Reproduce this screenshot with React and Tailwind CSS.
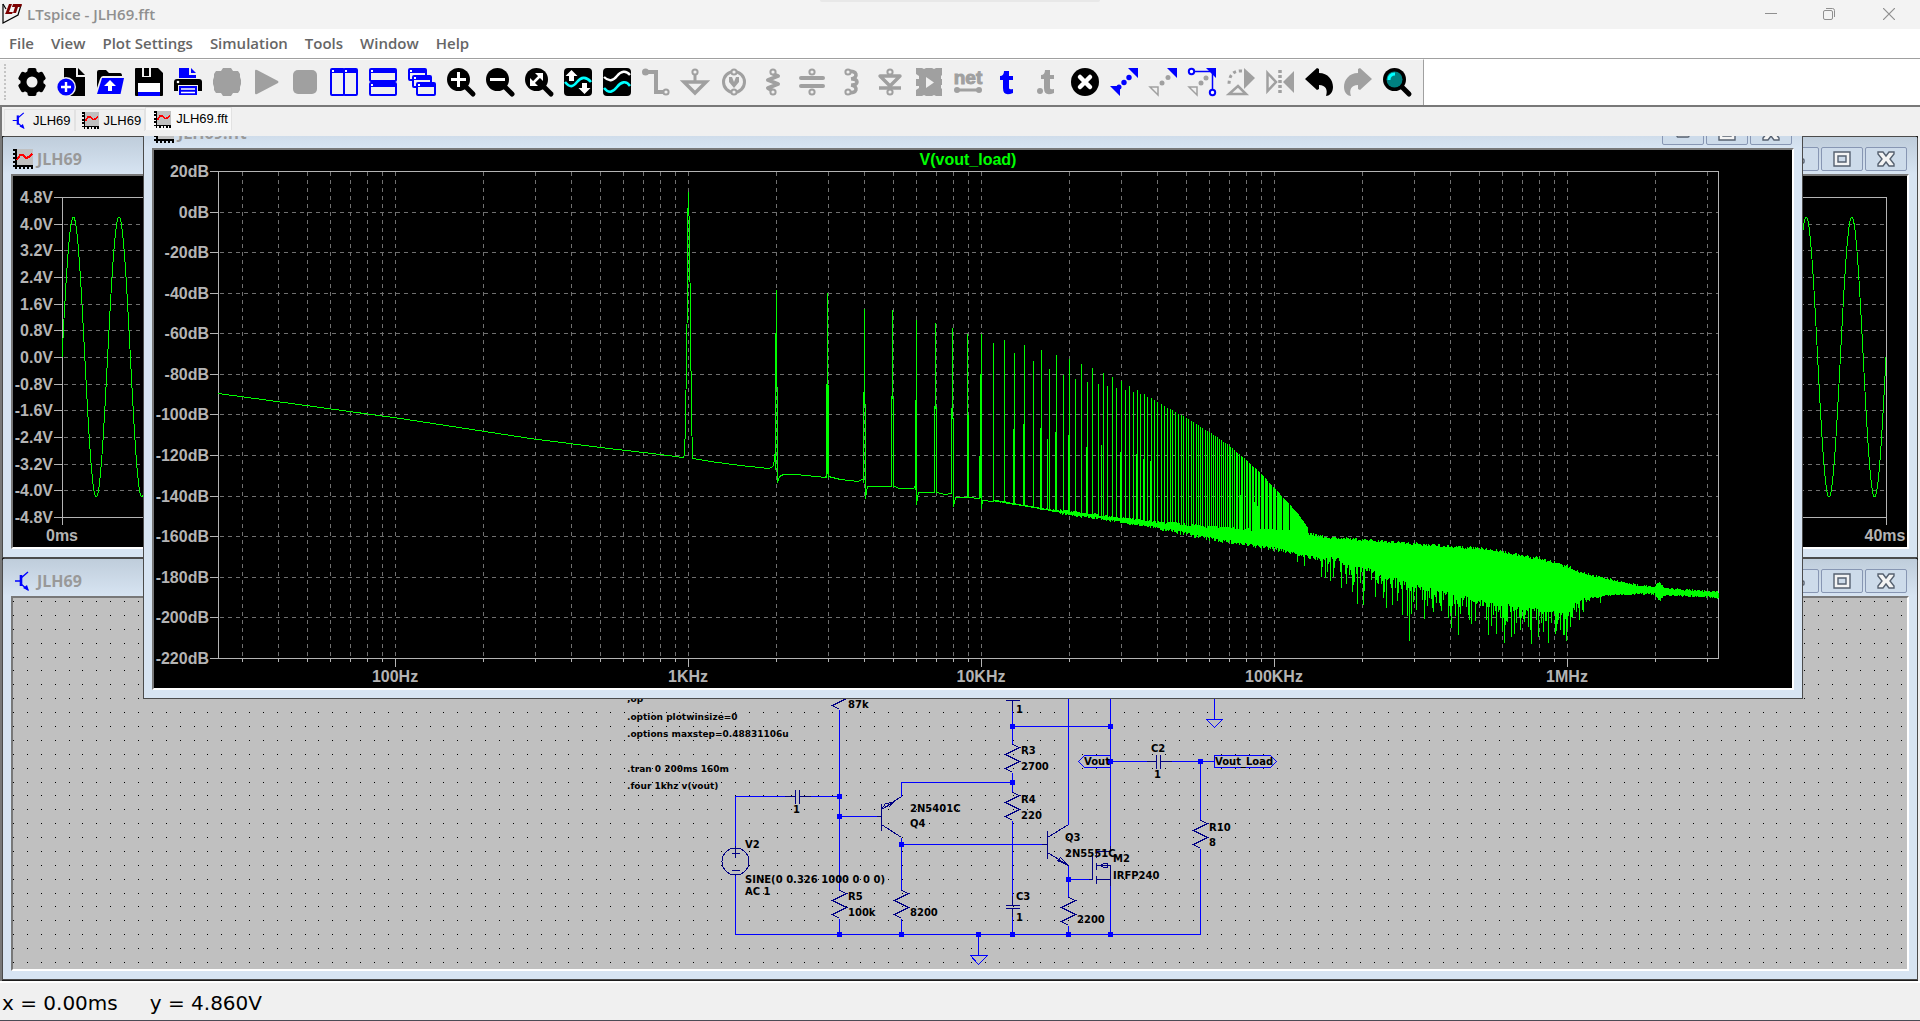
const BLUE = "#0000ff";
const NAVY = "#000084";
const GREY = "#a0a0a0";
const FACE = "#f0f0f0";

const menus = ["File", "View", "Plot Settings", "Simulation", "Tools", "Window", "Help"];

/* ---------- toolbar icons, 28x28 ---------- */

const Teeth = ({ color }) => (
  <g fill={color}>
    <circle cx="14" cy="14" r="11.5" />
    <rect x="9.5" y="0" width="9" height="28" rx="2" />
    <rect x="9.5" y="0" width="9" height="28" rx="2" transform="rotate(60 14 14)" />
    <rect x="9.5" y="0" width="9" height="28" rx="2" transform="rotate(120 14 14)" />
  </g>
);

const Lens = ({ children }) => (
  <g>
    <path d="M18 18L26 26" stroke="#000" strokeWidth="5" strokeLinecap="round" />
    <circle cx="11.5" cy="11.5" r="11.5" fill="#000" />
    {children}
  </g>
);

const MiniWindow = ({ x, y, w, h }) => (
  <g>
    <rect x={x + 1} y={y + 1} width={w - 2} height={h - 2} rx="1" fill={FACE} stroke={BLUE} strokeWidth="2" />
    <rect x={x + 1} y={y + 1} width={w - 2} height="4" fill={BLUE} />
    <rect x={x + 2} y={y + 2} width="2" height="2" fill="#fff" />
  </g>
);

const Pin = ({ x, y }) => <circle cx={x} cy={y} r="2.6" fill={FACE} stroke={GREY} strokeWidth="2" />;

const tools = [
  ["Settings", <><Teeth color="#000" /><circle cx="14" cy="14" r="5.5" fill={FACE} /></>],
  ["New schematic", <>
    <path d="M7 0H19V9H28V28H7Z" fill="#000" />
    <path d="M21 0L28 7H21Z" fill="#000" />
    <circle cx="9" cy="19" r="10" fill={FACE} />
    <circle cx="9" cy="19" r="8.6" fill={BLUE} />
    <path d="M9 14V24M4 19H14" stroke="#fff" strokeWidth="2.4" />
  </>],
  ["Open", <>
    <path d="M1 20V4Q1 2 3 2H10L13 5H24Q26 5 26 8H7Q5 8 4 11Z" fill="#000" />
    <path d="M6 10H28L24.500 26H1Z" fill={BLUE} />
    <path d="M14 12L20 18H16V23H12V18H8Z" fill="#fff" />
  </>],
  ["Save", <>
    <path d="M0 1Q0 0 1 0H23L28 5V27Q28 28 27 28H1Q0 28 0 27Z" fill="#000" />
    <rect x="7" y="0" width="12" height="9" fill={FACE} />
    <rect x="9" y="0" width="5" height="8" fill="#000" />
    <rect x="16" y="0" width="6" height="10" fill="#000" />
    <rect x="3" y="15" width="22" height="9" fill="#fff" />
    <rect x="3" y="24" width="22" height="4" fill={BLUE} />
  </>],
  ["Print", <>
    <path d="M5 0H15V7H22V10H5Z" fill={BLUE} />
    <path d="M17 0L22 5H17Z" fill={BLUE} />
    <path d="M3 11H25Q28 11 28 14V23H0V14Q0 11 3 11Z" fill="#000" />
    <circle cx="4" cy="14" r="1.300" fill="#fff" />
    <rect x="4" y="17" width="20" height="11" fill={FACE} />
    <path d="M5 18H23V27H5Z" fill={BLUE} />
    <path d="M7 21H21M7 24.500H21" stroke="#fff" strokeWidth="1.300" />
  </>],
  ["Edit simulation", <path d="M10 0H18L20 3H25L27 6V9L28 12V16L27 19V22L25 25H20L18 28H10L8 25H3L1 22V19L0 16V12L1 9V6L3 3H8Z" fill={GREY} />],
  ["Run", <path d="M3 3Q3 1 5 2L26 13Q27 14 26 15L5 26Q3 27 3 25Z" fill={GREY} />],
  ["Stop", <rect x="2" y="2" width="24" height="24" rx="5" fill={GREY} />],
  ["Tile vertically", <><MiniWindow x={0} y={0} w={15} h={28} /><MiniWindow x={13} y={0} w={15} h={28} /></>],
  ["Tile horizontally", <><MiniWindow x={0} y={0} w={28} h={14} /><MiniWindow x={0} y={14} w={28} h={14} /></>],
  ["Cascade", <>
    <MiniWindow x={0} y={0} w={19} h={13} />
    <MiniWindow x={4} y={7} w={20} h={13} />
    <MiniWindow x={8} y={14} w={20} h={14} />
  </>],
  ["Zoom in", <Lens><path d="M11.500 4V19M4 11.500H19" stroke="#fff" strokeWidth="3" /></Lens>],
  ["Zoom out", <Lens><path d="M4 11.500H19" stroke="#fff" strokeWidth="3" /></Lens>],
  ["Zoom to fit", <Lens>
    <path d="M8 15L15 8" stroke="#fff" strokeWidth="2.500" />
    <path d="M10 5H18V13ZM5 10V18H13Z" fill="#fff" />
  </Lens>],
  ["Autorange", <>
    <rect width="28" height="28" rx="4" fill="#000" />
    <path d="M1 14C6 20 9 19 13 14S22 8 27 14" fill="none" stroke="#00ffff" strokeWidth="2.600" />
    <path d="M7.500 2L13.500 8H10V13H5V8H1.500ZM20.500 26L26.500 20H23V15H18V20H14.500Z" fill="#fff" />
  </>],
  ["Add trace", <>
    <rect width="28" height="28" rx="4" fill="#000" />
    <path d="M1 9C6 14 10 13 14 8S23 2 27 7" fill="none" stroke="#fff" strokeWidth="2.400" />
    <path d="M1 20C6 26 10 24 14 19S23 12 27 18" fill="none" stroke="#00ffff" strokeWidth="2.600" />
  </>],
  ["Wire", <>
    <path d="M3 4H14V24H22" fill="none" stroke={GREY} strokeWidth="4" />
    <circle cx="3.500" cy="4" r="3.500" fill={GREY} /><Pin x={24} y={24} />
  </>],
  ["Ground", <>
    <path d="M14 6V13" stroke={GREY} strokeWidth="3" />
    <path d="M3 14H25L14 25Z" fill="none" stroke={GREY} strokeWidth="3.500" /><Pin x={14} y={4} />
  </>],
  ["Voltage source", <>
    <circle cx="14" cy="14" r="10.500" fill="none" stroke={GREY} strokeWidth="3" />
    <path d="M9 9H12L14 14L16 9H19V14L14 20L9 14Z" fill={GREY} /><Pin x={14} y={4} /><Pin x={14} y={24} />
  </>],
  ["Resistor", <>
    <path d="M14 6L19 8L9 12L19 16L9 20L14 23" fill="none" stroke={GREY} strokeWidth="4" strokeLinejoin="round" />
    <Pin x={14} y={4} /><Pin x={14} y={24} />
  </>],
  ["Capacitor", <>
    <path d="M3 10H25M3 18H25" stroke={GREY} strokeWidth="4" strokeLinecap="round" />
    <Pin x={14} y={4} /><Pin x={14} y={24} />
  </>],
  ["Inductor", <>
    <path d="M11 4C20 1 22 10 14 11C22 10 22 18 14 17C22 18 20 27 11 24" fill="none" stroke={GREY} strokeWidth="3.600" />
    <Pin x={11} y={4} /><Pin x={11} y={24} />
  </>],
  ["Diode", <>
    <path d="M4 8H24L14 18ZM3 20H25" fill="none" stroke={GREY} strokeWidth="3.400" strokeLinejoin="round" />
    <Pin x={14} y={4} /><Pin x={14} y={24} />
  </>],
  ["Component", <>
    <path d="M1 0H7L9 1L11 0H17L19 1L21 0H27V7L26 8V11H27V17H26V20L27 21V28H21L19 27L17 28H11L9 27L7 28H1V22L4 20V18H1V11H4V8L1 6Z" fill={GREY} />
    <path d="M11 9L19 14.500L11 20Z" fill={FACE} />
  </>],
  ["Net name", <>
    <text x="14" y="16" textAnchor="middle" fontSize="19" fontWeight="bold" fill={GREY} stroke={GREY} fontFamily="Liberation Sans, sans-serif">net</text>
    <path d="M3 22H25" stroke={GREY} strokeWidth="3" />
    <circle cx="3" cy="22" r="3" fill={GREY} /><circle cx="25" cy="22" r="3" fill={GREY} />
  </>],
  ["Text", <path d="M11 3H16V8H20V12H16V20Q16 22 20 21V25Q10 29 10 20V12H7V8Q11 8 11 3Z" fill={BLUE} />],
  ["SPICE directive", <>
    <path d="M13 2H18V7H22V11H18V20Q18 22 22 21V25Q12 29 12 20V11H9V7Q13 7 13 2Z" fill={GREY} />
    <circle cx="8" cy="23" r="3" fill={GREY} />
  </>],
  ["Delete", <>
    <circle cx="14" cy="14" r="14" fill="#000" />
    <path d="M9 9L19 19M19 9L9 19" stroke="#fff" strokeWidth="4.500" strokeLinecap="round" />
  </>],
  ["Move", <>
    <path d="M18 0H28V10ZM0 18H10V28Z" fill={BLUE} />
    <circle cx="9" cy="19" r="2.500" fill={BLUE} /><circle cx="14" cy="14.500" r="2.700" fill={BLUE} /><circle cx="19" cy="9.500" r="2.700" fill={BLUE} />
  </>],
  ["Copy", <>
    <path d="M18 0H28V10Z" fill={BLUE} /><path d="M1 19H9V27Z" fill="none" stroke={GREY} strokeWidth="1.500" />
    <circle cx="13" cy="15" r="2.500" fill={GREY} /><circle cx="19" cy="9.500" r="2.500" fill={GREY} />
  </>],
  ["Drag", <>
    <path d="M18 0H28V10Z" fill={BLUE} /><path d="M1 19H9V27Z" fill="none" stroke={GREY} strokeWidth="1.500" />
    <circle cx="13" cy="15" r="2.500" fill={GREY} /><circle cx="18" cy="10" r="2.500" fill={GREY} />
    <path d="M6 3.500H24.500V22" fill="none" stroke={BLUE} strokeWidth="1.500" />
    <circle cx="3.500" cy="3.500" r="2.700" fill="#fff" stroke={BLUE} strokeWidth="2" /><circle cx="24.500" cy="24.500" r="2.700" fill="#fff" stroke={BLUE} strokeWidth="2" />
  </>],
  ["Rotate", <>
    <path d="M17 0L28 10L17 21Z" fill={GREY} />
    <path d="M15 3Q2 2 2 17" fill="none" stroke={GREY} strokeWidth="3" strokeDasharray="3 3" />
    <path d="M2 26H19L11 18Z" fill="none" stroke={GREY} strokeWidth="2.500" />
  </>],
  ["Mirror", <>
    <path d="M1.500 5L10 14L1.500 23Z" fill="none" stroke={GREY} strokeWidth="2.500" />
    <path d="M28 3V25L17 14Z" fill={GREY} />
    <path d="M14 2V27" stroke={GREY} strokeWidth="3.500" strokeDasharray="3 2" />
  </>],
  ["Undo", <path d="M0 11L12 0L14 1V5C23 5 28 12 28 19C28 25 24 28 21 28C23 22 21 17 14 17V21L12 22Z" fill="#000" />],
  ["Redo", <path d="M28 11L16 0L14 1V5C5 5 0 12 0 19C0 25 4 28 7 28C5 22 7 17 14 17V21L16 22Z" fill={GREY} />],
  ["Find", <Lens>
    <circle cx="11.500" cy="11.500" r="8" fill="#008080" />
    <path d="M6 12Q6 6 12 6" fill="none" stroke="#00ffff" strokeWidth="3" />
  </Lens>],
];

/* ---------- small document icons ---------- */

const PlotIcon = ({ size }) => (
  <svg width={size} height={size} viewBox="0 0 20 20" className="shrink-0" shapeRendering="crispEdges">
    <rect x="4" y="0" width="16" height="16" fill="#c0c0c0" />
    <path d="M3 0V17H20M0 1H3M0 5H3M0 9H3M0 13H3M0 17H3M3 19.500V17M7 20V17M11 20V17M15 20V17M19 20V17" stroke="#000" strokeWidth="2" fill="none" />
    <path d="M4 11L7 6L10 6L13 9L16 8L19 5" stroke="#f00" strokeWidth="2" fill="none" />
  </svg>
);

const TransistorIcon = ({ size }) => (
  <svg width={size} height={size} viewBox="0 0 20 20" className="shrink-0">
    <path d="M2 10H7M8 7L15 1M8 13L15 19" stroke={BLUE} strokeWidth="1.400" />
    <path d="M8 4V15" stroke={BLUE} strokeWidth="2.600" />
    <path d="M16 20L10 17L14 14Z" fill={BLUE} />
  </svg>
);

/* ---------- MDI child window ---------- */

const captionIcons = {
  Minimize: <rect x="4" y="9" width="12" height="4" rx="1" />,
  Maximize: <path fillRule="evenodd" d="M2 2H18V16H2ZM6 6V12H14V6Z" />,
  Close: <path d="M2 2H7L10 6L13 2H18V4L14 9L18 14V16H13L10 12L7 16H2V14L6 9L2 4Z" />,
};

function Child({ title, icon, className, children }) {
  return (
    <section className={`flex flex-col border border-[#4b4b4b] bg-[#d7e4f2] ${className}`}>
      <header className="flex h-[37px] shrink-0 items-center gap-1 bg-linear-to-b from-[#bfcddb] to-[#d7e4f2] px-[10px] pt-[7px]">
        {icon}
        <h2 className="grow text-[16px] leading-5 font-bold text-[#999]">{title}</h2>
        <div className="flex gap-[2px]">
          {Object.keys(captionIcons).map((name) => (
            <button key={name} aria-label={name} className="flex h-6 w-[42px] items-center justify-center rounded-xs border border-[#8796b3] bg-[#cddbea]">
              <svg width="20" height="18" fill="#f4f4f4" stroke="#55606f" strokeWidth="1.400">{captionIcons[name]}</svg>
            </button>
          ))}
        </div>
      </header>
      <div className="mx-2 mb-2 min-h-0 grow border-2 border-t-[#787878] border-r-white border-b-white border-l-[#787878]">
        {children}
      </div>
    </section>
  );
}

/* ---------- waveform pane ---------- */

const volts = ["4.8V", "4.0V", "3.2V", "2.4V", "1.6V", "0.8V", "0.0V", "-0.8V", "-1.6V", "-2.4V", "-3.2V", "-4.0V", "-4.8V"];

function sinePoints() {
  const pts = [];
  for (let x = 0; x <= 1824; x++) {
    const y = 357 - 140 * Math.sin((2 * Math.PI * x) / 45.6);
    pts.push(`${x + 62},${y.toFixed(1)}`);
  }
  return pts.join(" ");
}

function TransientPlot() {
  return (
    <svg viewBox="13 176 1894 371" className="block h-full w-full bg-black" shapeRendering="crispEdges">
      <path d="M54 197.500H1886.500V525M62.500 197V525M54 517.500H1886" fill="none" stroke="#b4b4b4" />
      {volts.map((v, i) => {
        const y = Math.round(197 + i * 26.667);
        return (
          <g key={v}>
            <path d={`M54 ${y}.5H62`} stroke="#b4b4b4" />
            {i > 0 && i < 12 && <path d={`M64 ${y}.5H1886`} stroke="#707070" strokeDasharray="4 4" />}
            <text x="53" y={y + 6} textAnchor="end" fontSize="16" fontWeight="bold" fill="#b4b4b4">{v}</text>
          </g>
        );
      })}
      <text x="62" y="541" textAnchor="middle" fontSize="16" fontWeight="bold" fill="#b4b4b4">0ms</text>
      <text x="1885" y="541" textAnchor="middle" fontSize="16" fontWeight="bold" fill="#b4b4b4">40ms</text>
      <polyline points={sinePoints()} fill="none" stroke="#00ff00" strokeLinejoin="bevel" />
    </svg>
  );
}

/* ---------- FFT pane ---------- */

const decade = 293;
const freqX = (hz) => Math.round(688 + decade * Math.log10(hz / 1000));

const freqLabels = [[100, "100Hz"], [1000, "1KHz"], [10000, "10KHz"], [100000, "100KHz"], [1000000, "1MHz"]];

const gridFreqs = [];
for (let d = 10; d <= 1000000; d *= 10) {
  for (let m = 1; m < 10; m++) {
    if (d * m > 25 && d * m < 3280000) gridFreqs.push(d * m);
  }
}

// linear interpolation over [x, y] rows
function interp(rows, x) {
  let i = 1;
  while (i < rows.length - 1 && rows[i][0] < x) i++;
  const [x0, y0] = rows[i - 1];
  const [x1, y1] = rows[i];
  return y0 + ((y1 - y0) * (x - x0)) / (x1 - x0);
}

// tops of the harmonics 11 to 39
const combTops = [343, 340, 353, 345, 361, 350, 369, 355, 375, 359, 379, 364, 382, 368, 384, 373, 386, 377, 388, 381, 390, 386, 392, 390, 394, 394, 397, 398, 400];
const combEnvelope = [[1157, 402], [1186, 418], [1209, 432], [1228, 445], [1246, 460], [1260, 473], [1274, 488], [1286, 501], [1297, 513], [1307, 527], [1313, 535]];

const sideSpikes = [
  [775, 333], [777, 387], [826, 384], [828, 385], [863, 392], [865, 404], [893, 398], [915, 401], [936, 407], [953, 418],
  [968, 415], [980, 414], [1013, 429], [1023, 424], [1033, 433], [1040, 428], [1047, 439], [1055, 432], [1063, 442], [1068, 435],
  [1086, 447], [1101, 445], [1120, 452], [1136, 454], [1143, 459], [1150, 461], [1205, 482], [1236, 493], [1240, 495], [1254, 502], [1257, 506],
];

const floorTop = [[993, 500], [1040, 508], [1075, 513], [1100, 516], [1130, 520], [1157, 523], [1186, 526], [1209, 528], [1246, 531], [1274, 532], [1296, 530], [1312, 536], [1322, 538], [1340, 540], [1362, 541], [1390, 543], [1414, 545], [1450, 548], [1480, 550], [1503, 553], [1521, 557], [1540, 560], [1553, 564], [1567, 568], [1579, 573], [1590, 576], [1613, 581], [1636, 586], [1654, 588], [1659, 583], [1664, 589], [1687, 591], [1718, 593]];
const floorBottom = [[993, 500], [1040, 508], [1075, 514], [1100, 517], [1130, 522], [1157, 526], [1186, 531], [1209, 536], [1246, 542], [1274, 546], [1297, 551], [1315, 556], [1340, 560], [1362, 568], [1384, 576], [1407, 584], [1430, 590], [1450, 594], [1480, 601], [1503, 605], [1521, 608], [1540, 610], [1567, 613], [1579, 601], [1590, 596], [1613, 593], [1636, 592], [1654, 592], [1659, 599], [1664, 593], [1687, 594], [1718, 596]];
const deepSpikes = [[1297, 562], [1304, 566], [1325, 578], [1330, 581], [1341, 588], [1352, 592], [1357, 604], [1363, 605], [1386, 608], [1392, 605], [1402, 615], [1407, 616], [1409, 641], [1411, 614], [1424, 619], [1433, 612], [1441, 611], [1451, 628], [1458, 635], [1475, 621], [1488, 635], [1496, 634], [1504, 643], [1511, 637], [1514, 634], [1520, 630], [1531, 644], [1538, 637], [1543, 632], [1548, 643], [1555, 634], [1566, 641], [1570, 627], [1579, 620], [1582, 603], [1600, 603]];

function spectrumPath() {
  let seed = 7;
  const rand = () => {
    seed = (seed * 16807) % 2147483647;
    return seed / 2147483647;
  };
  let d = "";
  const bar = (x, top, bottom) => {
    d += `M${x}.5 ${Math.round(top)}V${Math.round(bottom)}`;
  };

  for (let k = 11; k <= 130; k++) {
    const x = freqX(k * 1000);
    const top = k < 40 ? combTops[k - 11] : interp(combEnvelope, x);
    bar(x, top, interp(floorBottom, x));
  }
  sideSpikes.forEach(([x, top]) => bar(x, top, x < 993 ? interp([[775, 470], [828, 478], [893, 487], [936, 492], [993, 500]], x) : interp(floorTop, x)));

  for (let x = 993; x <= 1718; x++) {
    let jitter = 4;
    if (x < 1060) jitter = 0.6;
    else if (x < 1160 || x > 1590) jitter = 2;
    const top = interp(floorTop, x) - rand() * Math.min(jitter, 3);
    let bottom = interp(floorBottom, x) + 1 + rand() * jitter;
    if (x > 1320 && x < 1585) {
      const r = rand();
      bottom += r * r * r * 26 - 3;
    }
    bar(x, top, bottom);
  }
  deepSpikes.forEach(([x, y]) => bar(x, interp(floorTop, x), y));
  return d;
}

const lowTrace =
  "218,393 400,418 530,438 600,447 660,454 682,457 684,456 685,423 686,357 687,291 687,225 688,192 689,237 690,325 691,413 692,458 710,461 740,465 768,468 " +
  "773,466 775,450 776,290 777,482 779,476 783,474 795,474 825,477 827,472 827,293 828,476 840,479 858,481 863,478 864,309 865,498 867,486 891,486 892,310 893,485 " +
  "898,488 913,488 915,485 916,320 916,504 918,492 934,492 935,323 936,492 945,494 951,493 952,328 953,506 955,497 967,497 967,334 968,497 979,498 981,334 981,508 982,500 993,501";

function FftPlot() {
  return (
    <svg viewBox="154 150 1638 538" className="block h-full w-full bg-black" shapeRendering="crispEdges">
      {gridFreqs.map((f) => {
        const x = freqX(f);
        const major = freqLabels.some(([hz]) => hz === f);
        return (
          <g key={f}>
            <path d={`M${x}.5 172V658`} stroke="#707070" strokeDasharray="4 4" />
            <path d={`M${x}.5 658V${major ? 667 : 662}`} stroke="#b4b4b4" />
          </g>
        );
      })}
      {Array.from({ length: 13 }, (_, i) => {
        const y = Math.round(171 + i * 40.583);
        return (
          <g key={i}>
            {i > 0 && i < 12 && <path d={`M220 ${y}.5H1718`} stroke="#707070" strokeDasharray="4 4" />}
            <path d={`M210 ${y}.5H218`} stroke="#b4b4b4" />
            <text x="209" y={y + 6} textAnchor="end" fontSize="16" fontWeight="bold" fill="#b4b4b4">{20 - i * 20}dB</text>
          </g>
        );
      })}
      <rect x="218.500" y="171.500" width="1500" height="487" fill="none" stroke="#b4b4b4" />
      {freqLabels.map(([hz, label]) => (
        <text key={label} x={freqX(hz)} y="682" textAnchor="middle" fontSize="16" fontWeight="bold" fill="#b4b4b4">{label}</text>
      ))}
      <text x="968" y="165" textAnchor="middle" fontSize="16" fontWeight="bold" fill="#00ff00">V(vout_load)</text>
      <polyline points={lowTrace} transform="translate(.5 .5)" fill="none" stroke="#00ff00" strokeLinejoin="bevel" />
      <path d={spectrumPath()} stroke="#00ff00" />
    </svg>
  );
}

/* ---------- schematic ---------- */

function gridDots() {
  let d = "";
  for (let i = 0; i < 137; i++) {
    for (let j = 0; j < 27; j++) {
      d += `M${Math.round(13 + i * 13.885)} ${Math.round(601 + j * 13.885)}.5h1`;
    }
  }
  return d;
}

const resistors = [[839, 890], [901, 890], [1012, 744], [1012, 792], [1068, 897], [1200, 820]];
const junctions = [[839, 796], [839, 816], [901, 844], [839, 934], [901, 934], [978, 934], [1012, 934], [1068, 934], [1110, 934], [1012, 726], [1110, 726], [1012, 782], [1110, 761], [1200, 761], [1068, 879]];
const directives = [
  [702, ";op"], [720, ".option plotwinsize=0"], [737, ".options maxstep=0.48831106u"],
  [772, ".tran 0 200ms 160m"], [789, ".four 1khz v(vout)"],
];
const labels = [
  [848, 708, "87k"], [793, 813, "1"], [745, 848, "V2"], [745, 883, "SINE(0 0.326 1000 0 0 0)"], [745, 895, "AC 1"],
  [848, 900, "R5"], [848, 916, "100k"], [910, 916, "8200"], [910, 812, "2N5401C"], [910, 827, "Q4"],
  [1016, 713, "1"], [1021, 754, "R3"], [1021, 770, "2700"], [1021, 803, "R4"], [1021, 819, "220"],
  [1016, 900, "C3"], [1016, 921, "1"], [1065, 841, "Q3"], [1065, 857, "2N5551C"], [1077, 923, "2200"],
  [1113, 862, "M2"], [1113, 879, "IRFP240"], [1084, 765, "Vout"], [1215, 765, "Vout_Load"],
  [1151, 752, "C2"], [1154, 778, "1"], [1209, 831, "R10"], [1209, 846, "8"],
];

function Schematic() {
  return (
    <svg viewBox="13 598 1894 371" className="block h-full w-full bg-[#c0c0c0]">
      <path d={gridDots()} stroke="#000" shapeRendering="crispEdges" />
      <g transform="translate(.5 .5)" fill="none" strokeWidth="1">
        <g stroke={BLUE} shapeRendering="crispEdges">
          <path d="M735 848V796H784M810 796H839M839 709V890M839 816H876M735 875V934H1200V848" />
          <path d="M901 796V782H1012M901 837V890M901 844H1041M901 918V934M839 918V934" />
          <path d="M1012 710V744M1012 726H1110M1012 772V792M1012 820V895M1012 916V934" />
          <path d="M1068 690V824M1068 865V897M1068 925V934M1068 879H1088M1110 690V845M1110 885V934" />
          <path d="M1110 761H1146M1171 761H1214M1200 761V820M978 934V955M1214 690V719" />
          <path d="M970 955H987L978 964ZM1206 719H1222L1214 727Z" />
          <path d="M1110 755H1084L1078 761L1084 767H1110M1214 755H1270L1276 761L1270 767H1214Z" />
        </g>
        <g stroke={NAVY} shapeRendering="crispEdges">
          {resistors.map(([x, y]) => (
            <path key={`${x}-${y}`} d={`M${x} ${y}l7 3l-14 7l14 7l-14 7l7 4`} />
          ))}
          <path d="M846 698L832 705L839 709" />
          <path d="M784 796H795M799 796H810M795 789V803M799 789V803" />
          <path d="M1005 700H1019M1012 700V710M1005 905H1019M1005 908H1019M1012 895V905M1012 908V916" />
          <path d="M1146 761H1156M1160 761H1171M1156 754V768M1160 754V768" />
          <circle cx="735" cy="861" r="13.500" />
          <path d="M735 845V857M731 853H739M731 870H739" />
          <path d="M876 816H881M881 803V830M881 809L901 796M881 824L901 837M881 809L885 803L893 802ZM881 809L893 802L888 807" />
          <path d="M1041 844H1047M1047 830V858M1047 837L1068 824M1047 852L1068 865M1068 865L1060 857L1057 860Z" />
          <path d="M1088 879H1092V851M1096 849V857M1096 862V869M1096 875V883M1096 851H1110V845M1096 879H1110M1096 865H1110V885M1100 865L1103 863H1107V867H1103Z" />
        </g>
      </g>
      <g fill={BLUE}>
        {junctions.map(([x, y]) => (
          <rect key={`${x}-${y}`} x={x - 2} y={y - 2} width="5" height="5" />
        ))}
      </g>
      <g fontWeight="bold" className="font-['DejaVu_Sans',sans-serif]">
        {directives.map(([y, s]) => (
          <text key={y} x="627" y={y} fontSize="9">{s}</text>
        ))}
        {labels.map(([x, y, s]) => (
          <text key={`${x}-${y}`} x={x} y={y} fontSize="10">{s}</text>
        ))}
      </g>
    </svg>
  );
}

/* ---------- page ---------- */

const tabs = [
  { name: "JLH69", icon: <TransistorIcon size={17} /> },
  { name: "JLH69", icon: <PlotIcon size={17} /> },
  { name: "JLH69.fft", icon: <PlotIcon size={17} />, active: true },
];

export default function App() {
  return (
    <div className="flex h-screen flex-col overflow-hidden bg-white font-['Open_Sans','Noto_Sans',sans-serif]">
      <header className="relative flex h-[29px] shrink-0 items-center bg-[#f3f3f3] pb-px pl-[2px]">
        <svg width="20" height="22" viewBox="0 0 20 22" className="shrink-0">
          <path d="M1 1V20L16 12L19 2" fill="none" stroke="#000" strokeWidth="1.200" />
          <path d="M1 1L4 6" stroke="#000" strokeWidth="1.200" />
          <path d="M7 1H10L7 9H11L10 11H3L4 9ZM11 1H20L19 4H16L14 10H11L13 4H10Z" fill="#7d0000" />
        </svg>
        <h1 className="ml-[5px] grow text-[15px] leading-5 font-semibold text-[#8f8f8f]">LTspice - JLH69.fft</h1>
        <div className="absolute top-0 left-1/2 h-[2px] w-[280px] -translate-x-1/2 rounded-b bg-[#e8e8e8]" />
        <div className="flex h-full">
          <button aria-label="Minimize" className="flex w-[58px] items-center justify-center">
            <svg width="12" height="12" fill="none" stroke="#8f8f8f"><path d="M0 5.500H12" /></svg>
          </button>
          <button aria-label="Restore" className="flex w-[58px] items-center justify-center">
            <svg width="12" height="12" fill="none" stroke="#8f8f8f"><rect x=".5" y="2.500" width="9" height="9" rx="1.500" /><path d="M3 .5H9.500Q11.500 .5 11.500 2.500V9" /></svg>
          </button>
          <button aria-label="Close" className="flex w-[62px] items-center justify-center">
            <svg width="12" height="12" fill="none" stroke="#8f8f8f" strokeWidth="1.200"><path d="M0 0L12 12M12 0L0 12" /></svg>
          </button>
        </div>
      </header>

      <nav className="flex h-[30px] shrink-0 items-center gap-[17px] border-b border-[#a0a0a0] bg-white pb-[2px] pl-[9px]">
        {menus.map((m) => (
          <button key={m} className="text-[15px] leading-5 font-semibold text-[#666]">{m}</button>
        ))}
      </nav>

      <div className="flex h-12 shrink-0 border-b-2 border-[#787878]">
        <div className="flex items-center border-t border-r border-t-white border-r-[#a0a0a0] bg-[#f0f0f0] pr-[7px] pb-px">
          <div className="ml-1 h-9 w-2 border-l-2 border-dotted border-[#c4c4c4]" />
          {tools.map(([name, art]) => (
            <button key={name} aria-label={name} className="flex h-full w-[39px] items-center justify-center">
              <svg width="28" height="28" viewBox="0 0 28 28" className="overflow-visible">{art}</svg>
            </button>
          ))}
        </div>
      </div>

      <div className="flex min-h-0 grow flex-col border-r-2 border-l-2 border-r-[#f0f0f0] border-l-[#787878]">
        <div className="flex h-[29px] shrink-0 items-start bg-[#f0f0f0] pl-[2px] font-['Liberation_Sans',Arial,sans-serif]">
          {tabs.map(({ name, icon, active }, i) => (
            <button
              key={i}
              className={`flex items-center gap-[5px] border border-b-0 border-[#e2e2e2] pr-[3px] text-[13px] leading-4 ${
                active ? "h-[23px] bg-[#f9f9f9] pl-2" : "mt-[2px] h-[22px] bg-[#f0f0f0] pl-[6px]"
              }`}
            >
              {icon}
              {name}
            </button>
          ))}
        </div>

        <main className="relative flex min-h-0 grow flex-col overflow-hidden bg-[#1c1c1c] pb-px">
          <Child title="JLH69" icon={<PlotIcon size={20} />} className="min-h-0 flex-1 rounded-t-[4px]">
            <div className="h-full font-['Liberation_Sans',Arial,sans-serif]"><TransientPlot /></div>
          </Child>
          <Child title="JLH69" icon={<TransistorIcon size={20} />} className="min-h-0 flex-1 rounded-t-[4px]">
            <Schematic />
          </Child>
          <Child title="JLH69.fft" icon={<PlotIcon size={20} />} className="absolute -top-[26px] right-[115px] left-[141px] h-[589px]">
            <div className="h-full font-['Liberation_Sans',Arial,sans-serif]"><FftPlot /></div>
          </Child>
        </main>
      </div>

      <footer className="flex h-10 shrink-0 items-center gap-8 border-t-2 border-b border-t-white border-b-[#4b4b55] bg-[#f0f0f0] pt-[2px] pl-[2px] font-['DejaVu_Sans',Verdana,sans-serif] text-[20px] leading-7 text-black">
        <span>x = 0.00ms</span>
        <span>y = 4.860V</span>
      </footer>
    </div>
  );
}
